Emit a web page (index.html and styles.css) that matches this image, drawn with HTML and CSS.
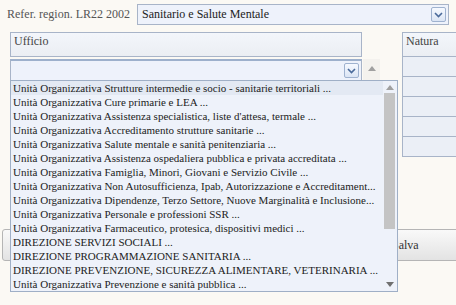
FILE: index.html
```html
<!DOCTYPE html>
<html lang="it">
<head>
    <meta charset="UTF-8">
    <title>Ufficio</title>
    <link rel="stylesheet" href="styles.css">
</head>
<body>
    <div class="top-row">
        <span class="top-label">Refer. region. LR22 2002</span>
        <div class="select top-select">
            <span>Sanitario e Salute Mentale</span>
            <span class="arrow-btn"><svg width="9" height="6" viewBox="0 0 9 6"><path d="M1 1 L4.5 4.5 L8 1" fill="none" stroke="#4a6a9a" stroke-width="1.6"/></svg></span>
        </div>
    </div>

    <div class="main">
        <div class="panel ufficio">
            <div class="panel-header">Ufficio</div>
            <div class="select inner-select">
                <span></span>
                <span class="arrow-btn"><svg width="9" height="6" viewBox="0 0 9 6"><path d="M1 1 L4.5 4.5 L8 1" fill="none" stroke="#4a6a9a" stroke-width="1.6"/></svg></span>
            </div>
        </div>
        <div class="gutter"><span class="tri-up"></span></div>
        <div class="panel natura">
            <div class="panel-header">Natura</div>
            <div class="cell"></div>
            <div class="cell"></div>
            <div class="cell"></div>
            <div class="cell"></div>
            <div class="cell"></div>
        </div>
    </div>

    <div class="buttons">
        <button class="btn btn-left"></button>
        <button class="btn btn-save">Salva</button>
    </div>

    <!-- open dropdown of the Ufficio select -->
    <div class="dropdown">
        <ul class="options">
            <li class="selected">Unità Organizzativa Strutture intermedie e socio - sanitarie territoriali ...</li>
            <li>Unità Organizzativa Cure primarie e LEA ...</li>
            <li>Unità Organizzativa Assistenza specialistica, liste d'attesa, termale ...</li>
            <li>Unità Organizzativa Accreditamento strutture sanitarie ...</li>
            <li>Unità Organizzativa Salute mentale e sanità penitenziaria ...</li>
            <li>Unità Organizzativa Assistenza ospedaliera pubblica e privata accreditata ...</li>
            <li>Unità Organizzativa Famiglia, Minori, Giovani e Servizio Civile ...</li>
            <li>Unità Organizzativa Non Autosufficienza, Ipab, Autorizzazione e Accreditament...</li>
            <li>Unità Organizzativa Dipendenze, Terzo Settore, Nuove Marginalità e Inclusione...</li>
            <li>Unità Organizzativa Personale e professioni SSR ...</li>
            <li>Unità Organizzativa Farmaceutico, protesica, dispositivi medici ...</li>
            <li>DIREZIONE SERVIZI SOCIALI ...</li>
            <li>DIREZIONE PROGRAMMAZIONE SANITARIA ...</li>
            <li>DIREZIONE PREVENZIONE, SICUREZZA ALIMENTARE, VETERINARIA ...</li>
            <li>Unità Organizzativa Prevenzione e sanità pubblica ...</li>
        </ul>
        <div class="scrollbar">
            <span class="tri-up"></span>
            <div class="thumb"></div>
            <span class="tri-down"></span>
        </div>
    </div>
</body>
</html>
```

FILE: styles.css
```css
body {
    margin: 0;
    background: #fbf9f4;
    font-family: "Liberation Serif", "Times New Roman", serif;
    font-size: 12px;
    color: #222;
    width: 456px;
    height: 305px;
    overflow: hidden;
    position: relative;
}

.top-row {
    display: flex;
    align-items: center;
    padding: 4px 7px 0 7px;
}

.top-label {
    color: #555;
    font-size: 12px;
    white-space: nowrap;
    width: 130px;
    flex: none;
}

.select {
    display: flex;
    align-items: center;
    justify-content: space-between;
    background: #eef2fb;
    border: 1px solid #a8b4c8;
    box-sizing: border-box;
}

.top-select {
    width: 312px;
    height: 21px;
    padding: 0 2px 0 4px;
    flex: none;
}

.arrow-btn {
    width: 13px;
    height: 13px;
    border: 1px solid #9fb2cf;
    border-radius: 2px;
    background: linear-gradient(#f6f9ff, #dbe5f4);
    display: flex;
    align-items: center;
    justify-content: center;
}

.main {
    display: flex;
    margin: 7px 0 0 10px;
}

.panel-header {
    height: 25px;
    box-sizing: border-box;
    border: 1px solid #a8b4c8;
    background: linear-gradient(#f3f6fb, #ebeef3);
    padding: 1px 3px;
    font-size: 12px;
    color: #444;
}

.ufficio {
    width: 352px;
}

.inner-select {
    margin-top: 2px;
    height: 22px;
    border-top: 2px solid #9db0cc;
    padding: 0 2px 0 4px;
}

.gutter {
    width: 17px;
    margin-top: 27px;
    height: 25px;
    background: #f4f2ee;
    display: flex;
    justify-content: center;
    padding-top: 7px;
    box-sizing: border-box;
    margin-left: 1px;
}

.tri-up, .tri-down {
    width: 0;
    height: 0;
    border-left: 4px solid transparent;
    border-right: 4px solid transparent;
}

.tri-up {
    border-bottom: 5px solid #a0a0a0;
}

.tri-down {
    border-top: 5px solid #707070;
}

.natura {
    margin-left: 22px;
    flex: 1;
}

.natura .panel-header {
    border-right: none;
}

.cell {
    height: 20px;
    background: #ebeff6;
    border: 1px solid #a8b4c8;
    border-right: none;
    border-top: none;
    box-sizing: border-box;
}

.natura .cell:first-of-type {
    margin-top: 2px;
    border-top: 1px solid #a8b4c8;
}

.buttons {
    display: flex;
    justify-content: space-between;
    margin: 72px 0 0 2px;
}

.btn {
    height: 32px;
    font-family: "Liberation Serif", serif;
    font-size: 12px;
    color: #333;
    background: linear-gradient(#f9f9f9, #e3e3e3);
    border: 1px solid #b5b5b5;
    border-radius: 3px;
}

.btn-left {
    width: 80px;
}

.btn-save {
    width: 74px;
    margin-right: -4px;
    text-align: left;
    padding-left: 5px;
}

.dropdown {
    position: absolute;
    left: 10px;
    top: 80px;
    width: 388px;
    height: 212px;
    box-sizing: border-box;
    background: #eef2fa;
    border: 1px solid #9fafc6;
    display: flex;
}

.options {
    list-style: none;
    margin: 0;
    padding: 0;
    flex: 1;
    font-size: 11px;
}

.options li {
    height: 14px;
    line-height: 14px;
    padding-left: 2px;
    white-space: nowrap;
    overflow: hidden;
}

.options li.selected {
    background: #e3e9f3;
}

.scrollbar {
    width: 13px;
    display: flex;
    flex-direction: column;
    align-items: center;
    padding: 4px 0 4px 0;
    margin-right: 1px;
}

.thumb {
    width: 11px;
    height: 136px;
    background: #c4c4c4;
    margin-top: 3px;
    flex: none;
}

.scrollbar .tri-down {
    margin-top: auto;
}
```
